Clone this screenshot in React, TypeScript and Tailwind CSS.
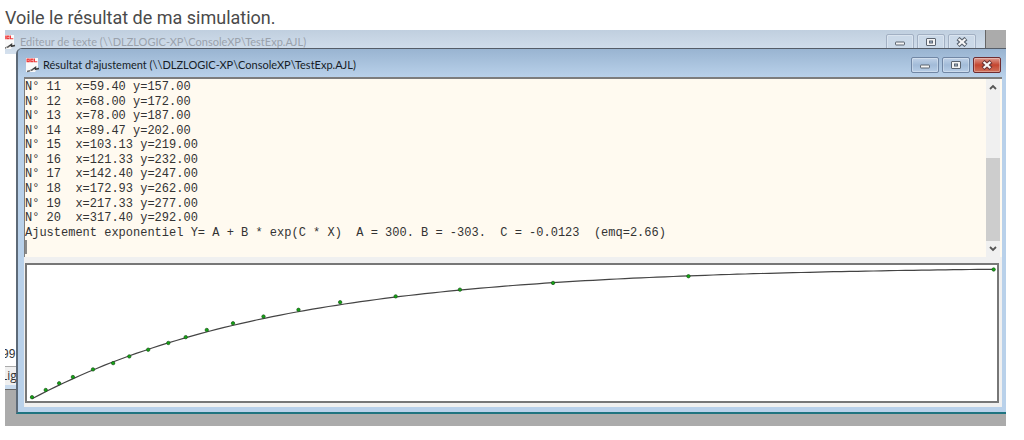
import React from "react";

const samples: [number, number][] = [
  [59.4, 157], [68, 172], [78, 187], [89.47, 202], [103.13, 219],
  [121.33, 232], [142.4, 247], [172.93, 262], [217.33, 277], [317.4, 292],
];

const firstSamples: [number, number][] = [
  [2.1, 7], [6.6, 23], [11, 38], [15.5, 52], [22.1, 69],
  [28.7, 83], [34, 98], [40.2, 113], [46.8, 128], [52.5, 141],
];

const toX = (x: number) => 3.05 * x - 1.4;
const toY = (y: number) => 4.5 + (292 - y) * 0.448;
const fit = (x: number) => 300 - 303 * Math.exp(-0.0123 * x);

const curve = Array.from({ length: 121 }, (_, i) => {
  const x = 2.1 + (315.3 * i) / 120;
  return `${toX(x).toFixed(1)},${(toY(fit(x)) + 0.6).toFixed(1)}`;
}).join(" ");

function AppIcon() {
  return (
    <svg viewBox="0 0 15 15" className="h-[15px] w-[15px] shrink-0" aria-hidden="true">
      <path d="M1 0H13V9L10 14H1Z" fill="#fafafa" />
      <path d="M1.5 .5H4.8V4.3H1.5ZM5.2 .5H8.4V4.3H5.2ZM8.8 .5H10V3.2H12.3V4.3H8.8Z" fill="#ee3c3c" />
      <path d="M2.6 2.4h1.2M6.4 2.4h2" stroke="#fcc" strokeWidth=".8" />
      <path d="M2 13.5L5 12.8M5.5 12.5L8 11.5" stroke="#666" strokeWidth="1.5" />
      <path d="M7.5 11.5L10.5 9.5V11.2L14 10.4" stroke="#3c3c3c" strokeWidth="1.5" fill="none" />
    </svg>
  );
}

type Kind = "min" | "max" | "close";

function Glyph({ kind, light }: { kind: Kind; light?: boolean }) {
  const edge = light ? "#6e3535" : "#5b6470";
  return (
    <svg viewBox="0 0 12 10" className="h-[10px] w-3" aria-hidden="true">
      {kind === "min" && <rect x="1.5" y="5" width="9" height="3" rx=".5" fill="#f4f4f4" stroke={edge} />}
      {kind === "max" && (
        <>
          <rect x="1.5" y="1.5" width="9" height="7" rx=".5" fill="#f4f4f4" stroke={edge} />
          <rect x="4.5" y="4" width="3" height="2" fill="#a9bdd4" stroke={edge} />
        </>
      )}
      {kind === "close" && (
        <>
          <path d="M2 1.5L10 8.5M10 1.5L2 8.5" stroke={edge} strokeWidth="4.4" />
          <path d="M2.6 2L9.4 8M9.4 2L2.6 8" stroke="#f8f8f8" strokeWidth="2.2" />
        </>
      )}
    </svg>
  );
}

const kinds: Kind[] = ["min", "max", "close"];
const labels = { min: "Réduire", max: "Agrandir", close: "Fermer" };

function WindowButtons({ active }: { active?: boolean }) {
  return (
    <div className="flex gap-[3px]">
      {kinds.map((k) => {
        const tone = !active
          ? "border-[#a2b0c3] bg-[#cbd9e8]"
          : k === "close"
            ? "border-[#6f2c30] bg-linear-to-b from-[#dc9a90] via-[#c4452f] to-[#d0705a]"
            : "border-[#7187a5] bg-linear-to-b from-[#c0d2e8] via-[#a2bbd8] to-[#b8cee7]";
        return (
          <button
            key={k}
            type="button"
            aria-label={labels[k]}
            className={`flex h-4 w-7 items-center justify-center rounded-xs border inset-ring inset-ring-white/30 ${tone}`}
          >
            <Glyph kind={k} light={active && k === "close"} />
          </button>
        );
      })}
    </div>
  );
}

function Chevron({ d }: { d: string }) {
  return (
    <svg viewBox="0 0 8 6" className="h-[6px] w-2" aria-hidden="true">
      <path d={d} fill="none" stroke="#555" strokeWidth="1.8" />
    </svg>
  );
}

export default function App() {
  return (
    <main className="bg-white pr-[18px] pl-[5px]">
      <p className="pt-[6px] font-['Roboto',sans-serif] text-[18px] leading-6 text-[#4a4a4a]">
        Voile le résultat de ma simulation.
      </p>

      <div className="relative flow-root overflow-hidden bg-[#ababab] font-['Lato',sans-serif] text-[11px]">
        <section className="absolute top-0 right-5 bottom-9 left-0 flex flex-col border-r border-b border-[#666] bg-white">
          <header className="flex h-6 items-center justify-between bg-linear-to-b from-[#c0cfdf] to-[#d5e1ee] pr-[9px]">
            <div className="flex items-center gap-1">
              <div className="-ml-1"><AppIcon /></div>
              <h2 className="whitespace-nowrap text-[#9aa2ac]">Editeur de texte (\\DLZLOGIC-XP\ConsoleXP\TestExp.AJL)</h2>
            </div>
            <WindowButtons />
          </header>
          <div className="flex flex-1 items-end pb-1 font-['Liberation_Sans',sans-serif] text-[12px] leading-4 text-[#333]">
            <span className="-ml-[3px]">99</span>
          </div>
          <footer className="border-t border-b-4 border-t-[#aaa] border-b-[#c9dbee] bg-[#f0f0f0] font-['Open_Sans',sans-serif] text-[12px] leading-[18px] text-[#333]">
            <span className="-ml-1">Lig</span>
          </footer>
        </section>

        <section className="relative mt-[18px] mb-3 ml-[11px] rounded-tl-md border-t border-b-2 border-l-2 border-t-[#555d68] border-b-[#1f7480] border-l-[#5d6a78] bg-[#b9d1ea]">
          <header className="flex h-7 items-center justify-between rounded-tl-sm bg-linear-to-b from-[#99b4d1] to-[#b9d1ea] pt-1 pr-[5px] pl-[7px]">
            <div className="flex items-center gap-[3px]">
              <AppIcon />
              <h1 className="whitespace-nowrap text-[#161c26]">Résultat d'ajustement (\\DLZLOGIC-XP\ConsoleXP\TestExp.AJL)</h1>
            </div>
            <WindowButtons active />
          </header>

          <div className="mr-1 mb-[5px] ml-[6px] bg-[#f0f0f0] pb-1">
            <div className="flex border-t-2 border-l border-[#7d7d7d] bg-[#fffaf0]">
              <ol className="flex h-[178px] flex-1 flex-col pt-px pb-[2px] font-['Liberation_Mono',monospace] text-[12px] leading-[14px] whitespace-pre text-[#333]">
                {samples.map(([x, y], i) => (
                  <li key={i} className="flex-1">
                    {`N° ${i + 11}  x=${x.toFixed(2)} y=${y.toFixed(2)}`}
                  </li>
                ))}
                <li className="flex-1">{"Ajustement exponentiel Y= A + B * exp(C * X)  A = 300. B = -303.  C = -0.0123  (emq=2.66)"}</li>
                <li className="flex-1"><span className="block h-[14px] w-[2px] bg-[#8a8a8a]" /></li>
              </ol>
              <div className="mr-[2px] flex w-[14px] flex-col bg-[#f0f0f0]">
                <button type="button" aria-label="Défiler vers le haut" className="flex h-4 items-center justify-center">
                  <Chevron d="M1 5L4 2L7 5" />
                </button>
                <div className="flex flex-1 items-end">
                  <div className="h-[83px] w-full bg-[#cdcdcd]" />
                </div>
                <button type="button" aria-label="Défiler vers le bas" className="flex h-4 items-center justify-center">
                  <Chevron d="M1 1L4 4L7 1" />
                </button>
              </div>
            </div>

            <div className="mt-[6px] mr-[3px] ml-px border-2 border-[#777] bg-white">
              <svg viewBox="0 0 970 136" preserveAspectRatio="none" className="block h-[136px] w-full" role="img" aria-label="Ajustement exponentiel">
                <polyline points={curve} fill="none" stroke="#444" strokeWidth="1.2" />
                {[...firstSamples, ...samples].map(([x, y], i) => (
                  <circle key={i} cx={toX(x)} cy={toY(y)} r="1.7" fill="#12a812" stroke="#1d501d" strokeWidth=".7" />
                ))}
              </svg>
            </div>
          </div>
        </section>
      </div>
    </main>
  );
}
